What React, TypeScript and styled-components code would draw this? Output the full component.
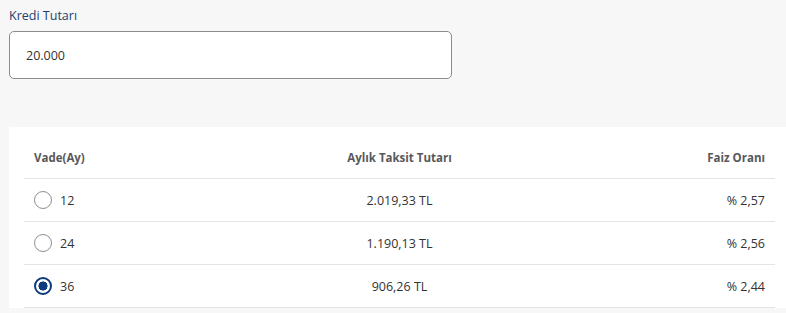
import React, { useState } from 'react';
import styled, { createGlobalStyle } from 'styled-components';

const GlobalStyle = createGlobalStyle`
  body {
    margin: 0;
    background: #f7f7f7;
    font-family: "Open Sans", "Noto Sans", sans-serif;
  }
`;

const Page = styled.div`
  padding: 7px 0 0 9px;
`;

const Label = styled.label`
  display: block;
  font-size: 12.5px;
  line-height: 18px;
  color: #1d416f;
  margin-bottom: 6px;
`;

const AmountInput = styled.input`
  box-sizing: border-box;
  width: 443px;
  height: 48px;
  padding: 0 16px;
  border: 1px solid #8c8c8c;
  border-radius: 5px;
  background: #fff;
  font-family: inherit;
  font-size: 12.5px;
  color: #333;
  outline: none;
`;

const Panel = styled.div`
  margin-top: 48px;
  background: #fff;
  padding: 0 11px 0 15px;
`;

const Row = styled.div<{ $head?: boolean }>`
  display: grid;
  grid-template-columns: 1fr 1fr 1fr;
  align-items: center;
  border-bottom: 1px solid #e4e4e4;
  height: ${({ $head }) => ($head ? '52px' : '43px')};
  box-sizing: border-box;
  padding-top: ${({ $head }) => ($head ? '10px' : '0')};
`;

const Cell = styled.div<{ $align: 'left' | 'center' | 'right'; $head?: boolean }>`
  display: flex;
  align-items: center;
  justify-content: ${({ $align }) =>
    $align === 'left' ? 'flex-start' : $align === 'right' ? 'flex-end' : 'center'};
  padding: 0 10px;
  font-size: ${({ $head }) => ($head ? '11.5px' : '12.5px')};
  font-weight: ${({ $head }) => ($head ? 700 : 400)};
  color: ${({ $head }) => ($head ? '#58585a' : '#333')};
`;

const Radio = styled.span<{ $checked: boolean }>`
  box-sizing: border-box;
  width: 18px;
  height: 18px;
  border-radius: 50%;
  margin-right: 8px;
  border: ${({ $checked }) => ($checked ? '2.5px solid #0b3a7d' : '1px solid #8f8f8f')};
  background: ${({ $checked }) =>
    $checked ? 'radial-gradient(circle, #0b3a7d 0 4.3px, #fff 4.8px)' : '#fff'};
  cursor: pointer;
`;

const rows = [
  { term: 12, amount: '2.019,33 TL', rate: '% 2,57' },
  { term: 24, amount: '1.190,13 TL', rate: '% 2,56' },
  { term: 36, amount: '906,26 TL', rate: '% 2,44' },
];

export default function App() {
  const [selected, setSelected] = useState(36);

  return (
    <Page>
      <GlobalStyle />
      <Label>Kredi Tutarı</Label>
      <AmountInput defaultValue="20.000" />
      <Panel>
        <Row $head>
          <Cell $align="left" $head>Vade(Ay)</Cell>
          <Cell $align="center" $head>Aylık Taksit Tutarı</Cell>
          <Cell $align="right" $head>Faiz Oranı</Cell>
        </Row>
        {rows.map((r) => (
          <Row key={r.term} onClick={() => setSelected(r.term)}>
            <Cell $align="left">
              <Radio $checked={selected === r.term} />
              {r.term}
            </Cell>
            <Cell $align="center">{r.amount}</Cell>
            <Cell $align="right">{r.rate}</Cell>
          </Row>
        ))}
      </Panel>
    </Page>
  );
}
